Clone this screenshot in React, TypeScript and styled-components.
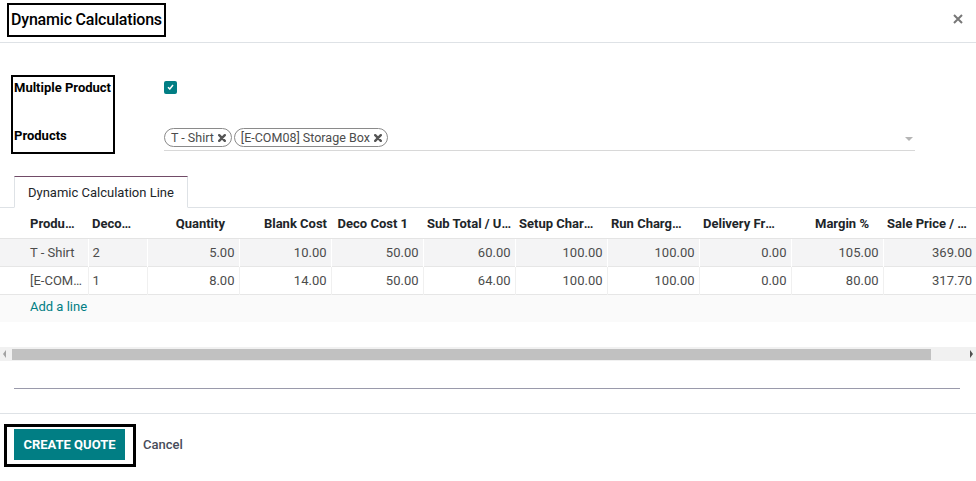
import styled, { createGlobalStyle } from 'styled-components';

const GlobalStyle = createGlobalStyle`
	html, body {
		margin: 0;
		padding: 0;
		background: #fff;
	}
	body {
		font-family: Roboto, "Noto Sans", sans-serif;
		font-size: 13px;
		color: #212529;
	}
`;

const Modal = styled.div`
	width: 976px;
	height: 481px;
	display: flex;
	flex-direction: column;
	overflow: hidden;
`;

const Header = styled.header`
	height: 43px;
	box-sizing: border-box;
	border-bottom: 1px solid #dee2e6;
	display: flex;
	justify-content: space-between;
	align-items: flex-start;
	padding: 3px 11px 0 7px;
`;

const TitleBox = styled.div`
	border: 2px solid #000;
	height: 34px;
	box-sizing: border-box;
	display: flex;
	align-items: center;
	padding: 0 2px 2px 2px;
`;

const Title = styled.h4`
	margin: 0;
	font-size: 16px;
	font-weight: 500;
	letter-spacing: -0.2px;
	color: #000;
`;

const CloseButton = styled.button`
	border: none;
	background: none;
	padding: 0;
	margin-top: 9px;
	width: 14px;
	height: 14px;
	display: flex;
	align-items: center;
	justify-content: center;
	cursor: pointer;
`;

const Body = styled.div`
	padding-top: 32px;
	display: flex;
	flex-direction: column;
`;

const Form = styled.div`
	display: flex;
	padding-left: 11px;
`;

const LabelBox = styled.div`
	width: 104px;
	height: 79px;
	box-sizing: border-box;
	border: 2px solid #000;
	display: flex;
	flex-direction: column;
	padding-left: 1px;
`;

const Label = styled.label<{ $gap?: number }>`
	font-weight: 700;
	font-size: 13px;
	line-height: 20px;
	margin-top: ${(p) => p.$gap ?? 0}px;
	color: #000;
	white-space: nowrap;
`;

const Values = styled.div`
	display: flex;
	flex-direction: column;
	margin-left: 49px;
	width: 751px;
	padding-top: 4px;
`;

const CheckRow = styled.div`
	height: 20px;
	display: flex;
	align-items: center;
	margin-top: -2px;
`;

const Check = styled.span`
	width: 13px;
	height: 13px;
	border-radius: 2px;
	background: #017e84;
	display: flex;
	align-items: center;
	justify-content: center;
`;

const TagField = styled.div`
	margin-top: 28px;
	height: 26px;
	box-sizing: border-box;
	border-bottom: 1px solid #d8d8d8;
	display: flex;
	align-items: center;
	gap: 2px;
	padding-right: 2px;
`;

const Tag = styled.span`
	height: 19px;
	box-sizing: border-box;
	border: 1px solid #8a8a8a;
	border-radius: 10px;
	padding: 0 5px 0 6px;
	display: inline-flex;
	align-items: center;
	gap: 4px;
	font-size: 12.5px;
	color: #4c4c4c;
	white-space: nowrap;
`;

const Caret = styled.span`
	margin-left: auto;
	margin-top: 2px;
	width: 0;
	height: 0;
	border-left: 4px solid transparent;
	border-right: 4px solid transparent;
	border-top: 4px solid #b5b5b5;
`;

const TabNav = styled.div`
	margin-top: 22px;
	display: flex;
	padding-left: 14px;
	border-bottom: 1px solid #dee2e6;
`;

const Tab = styled.div`
	height: 32px;
	box-sizing: border-box;
	margin-bottom: -1px;
	background: #fff;
	border: 1px solid #dee2e6;
	border-top: 1px solid #714b67;
	border-bottom: 1px solid #fff;
	padding: 0 13px;
	display: flex;
	align-items: center;
	font-size: 13px;
	color: #212529;
`;

const TableWrap = styled.div`
	width: 976px;
	overflow: hidden;
	padding-bottom: 26px;
`;

const Table = styled.table`
	width: 976px;
	table-layout: fixed;
	border-collapse: collapse;
	font-size: 13px;
`;

const Th = styled.th<{ $align?: 'left' | 'right'; $pr?: number }>`
	height: 30px;
	padding: 0 ${(p) => p.$pr ?? 4}px 0 4px;
	text-align: ${(p) => p.$align ?? 'left'};
	font-weight: 700;
	color: #212529;
	white-space: nowrap;
	overflow: hidden;
	text-overflow: ellipsis;
	border-bottom: 1px solid #e4e4e4;
	box-shadow: 0 1px 2px rgba(0, 0, 0, 0.05);
`;

const Tr = styled.tr<{ $shaded?: boolean }>`
	background: ${(p) => (p.$shaded ? '#f4f4f5' : '#fff')};
	border-bottom: 1px solid #e6e6e6;
`;

const Td = styled.td<{ $align?: 'left' | 'right'; $shaded?: boolean }>`
	height: 27px;
	padding: 0 4px;
	text-align: ${(p) => p.$align ?? 'left'};
	color: #4c4c4c;
	white-space: nowrap;
	overflow: hidden;
	text-overflow: ellipsis;
	border-left: 1px solid ${(p) => (p.$shaded ? '#fff' : '#f0f0f0')};
	&:first-child,
	&:nth-child(2) {
		border-left: none;
	}
`;

const AddRow = styled.tr`
	background: #fafafa;
`;

const AddCell = styled.td`
	height: 23px;
	padding: 0 4px 4px;
`;

const AddLink = styled.a`
	color: #017e84;
	text-decoration: none;
	cursor: pointer;
`;

const ScrollTrack = styled.div`
	height: 14px;
	margin-top: -1px;
	background: #f1f1f1;
	display: flex;
	align-items: center;
	padding: 0 3px;
	gap: 6px;
`;

const Arrow = styled.span<{ $dir: 'left' | 'right' }>`
	width: 0;
	height: 0;
	border-top: 4px solid transparent;
	border-bottom: 4px solid transparent;
	${(p) =>
		p.$dir === 'left'
			? 'border-right: 3px solid #a3a3a3;'
			: 'border-left: 3px solid #505050; margin-left: auto;'}
`;

const Thumb = styled.div`
	width: 919px;
	height: 11px;
	background: #c1c1c1;
`;

const NoteField = styled.div`
	margin: 27px 16px 0 14px;
	border-bottom: 1px solid #9a9aab;
`;

const Footer = styled.footer`
	margin-top: 24px;
	border-top: 1px solid #dee2e6;
	padding: 10px 0 0 4px;
	display: flex;
	align-items: center;
	gap: 6px;
`;

const ButtonBox = styled.div`
	border: 3px solid #000;
	padding: 2px 8px 4px 7px;
	display: flex;
`;

const PrimaryButton = styled.button`
	width: 111px;
	height: 31px;
	border: none;
	background: #017e84;
	color: #fff;
	font-family: Roboto, sans-serif;
	font-weight: 700;
	font-size: 13px;
	text-transform: uppercase;
	padding: 0;
	cursor: pointer;
`;

const LinkButton = styled.button`
	border: none;
	background: none;
	padding: 0;
	font-family: Roboto, sans-serif;
	font-weight: 500;
	font-size: 13px;
	color: #474c5a;
	margin-left: 1px;
	margin-bottom: 2px;
	cursor: pointer;
`;

const TagX = () => (
	<svg width="8" height="8" viewBox="0 0 8 8">
		<path d="M1.2 1.2 L6.8 6.8 M6.8 1.2 L1.2 6.8" stroke="#555" strokeWidth="2.4" strokeLinecap="round" />
	</svg>
);

const columns: { label: string; width: number; align?: 'left' | 'right'; pr?: number }[] = [
	{ label: '', width: 26 },
	{ label: 'Product', width: 62, pr: 12 },
	{ label: 'Decoration', width: 59, pr: 12 },
	{ label: 'Quantity', width: 92, align: 'right', pr: 14 },
	{ label: 'Blank Cost', width: 92, align: 'right', pr: 4 },
	{ label: 'Deco Cost 1', width: 92, align: 'right', pr: 15 },
	{ label: 'Sub Total / Unit', width: 92, pr: 1 },
	{ label: 'Setup Charges', width: 92, pr: 10 },
	{ label: 'Run Charges', width: 92, pr: 16 },
	{ label: 'Delivery Freight', width: 92, pr: 14 },
	{ label: 'Margin %', width: 92, align: 'right', pr: 14 },
	{ label: 'Sale Price / Unit', width: 93, pr: 8 },
];

const rows = [
	['T - Shirt', '2', '5.00', '10.00', '50.00', '60.00', '100.00', '100.00', '0.00', '105.00', '369.00'],
	['[E-COM08] Storage Box', '1', '8.00', '14.00', '50.00', '64.00', '100.00', '100.00', '0.00', '80.00', '317.70'],
];

export default function App() {
	return (
		<Modal>
			<GlobalStyle />
			<Header>
				<TitleBox>
					<Title>Dynamic Calculations</Title>
				</TitleBox>
				<CloseButton aria-label="Close">
					<svg width="10" height="10" viewBox="0 0 10 10">
						<path d="M1 1 L9 9 M9 1 L1 9" stroke="#777" strokeWidth="2" />
					</svg>
				</CloseButton>
			</Header>
			<Body>
				<Form>
					<LabelBox>
						<Label $gap={1}>Multiple Product</Label>
						<Label $gap={28}>Products</Label>
					</LabelBox>
					<Values>
						<CheckRow>
							<Check>
								<svg width="7" height="6" viewBox="0 0 7 6">
									<path d="M1 3.2 L2.8 5 L6 1" stroke="#fff" strokeWidth="1.5" fill="none" />
								</svg>
							</Check>
						</CheckRow>
						<TagField>
							<Tag>
								T - Shirt <TagX />
							</Tag>
							<Tag>
								[E-COM08] Storage Box <TagX />
							</Tag>
							<Caret />
						</TagField>
					</Values>
				</Form>
				<TabNav>
					<Tab>Dynamic Calculation Line</Tab>
				</TabNav>
				<TableWrap>
					<Table>
						<colgroup>
							{columns.map((c, i) => (
								<col key={i} style={{ width: c.width }} />
							))}
						</colgroup>
						<thead>
							<tr>
								{columns.map((c, i) => (
									<Th key={i} $align={c.align} $pr={c.pr}>
										{c.label}
									</Th>
								))}
							</tr>
						</thead>
						<tbody>
							{rows.map((r, ri) => (
								<Tr key={ri} $shaded={ri === 0}>
									<Td $shaded={ri === 0} />
									{r.map((v, ci) => (
										<Td key={ci} $shaded={ri === 0} $align={ci >= 2 ? 'right' : 'left'}>
											{v}
										</Td>
									))}
								</Tr>
							))}
							<AddRow>
								<AddCell />
								<AddCell colSpan={11}>
									<AddLink>Add a line</AddLink>
								</AddCell>
							</AddRow>
						</tbody>
					</Table>
				</TableWrap>
				<ScrollTrack>
					<Arrow $dir="left" />
					<Thumb />
					<Arrow $dir="right" />
				</ScrollTrack>
				<NoteField />
			</Body>
			<Footer>
				<ButtonBox>
					<PrimaryButton>Create Quote</PrimaryButton>
				</ButtonBox>
				<LinkButton>Cancel</LinkButton>
			</Footer>
		</Modal>
	);
}
